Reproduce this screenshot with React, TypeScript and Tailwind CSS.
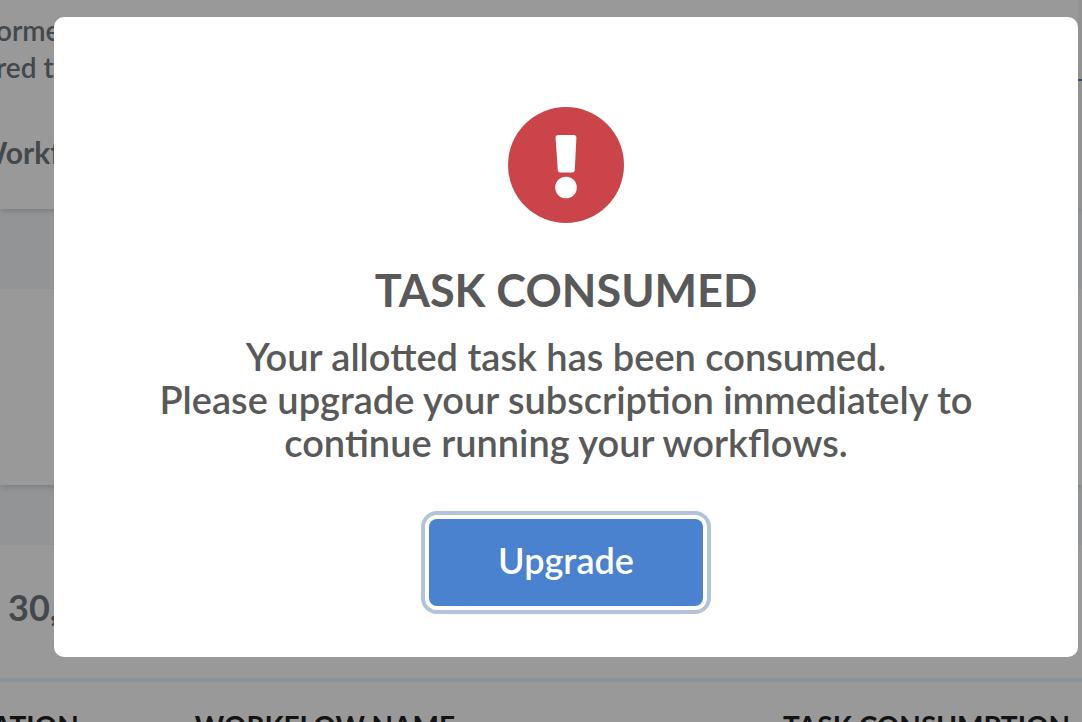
const columns = [
  { label: "ATION", className: "w-[18%] -indent-2" },
  { label: "WORKFLOW NAME", className: "w-[54%]" },
  { label: "TASK CONSUMPTION", className: "pl-1" },
];

const WarningIcon = () => (
  <svg viewBox="0 0 116 116" className="size-[116px]" aria-hidden="true">
    <circle cx="58" cy="58" r="58" fill="#ca444a" />
    <path
      d="M50.4 28h15.2a2.8 2.8 0 0 1 2.8 3l-1.6 31.900a2.600 2.600 0 0 1-2.600 2.500H52.400a2.600 2.600 0 0 1-2.600-2.500L47.600 31a2.800 2.800 0 0 1 2.800-3z"
      fill="#fff"
    />
    <circle cx="58" cy="80.500" r="10.800" fill="#fff" />
  </svg>
);

const Dashboard = () => (
  <div className="h-screen overflow-hidden bg-[#f3f7fa] whitespace-nowrap text-[#71797f]">
    <section className="flex h-[209px] justify-between bg-white shadow-md">
      <div className="-ml-1 pt-3">
        <p className="text-[28px] leading-[37px] font-semibold">
          orme
          <br />
          red t
        </p>
        <h2 className="-ml-5 pt-12 text-[30px] leading-9 font-bold">Workf</h2>
      </div>
      <div className="w-1 bg-[#f3f3f3] pt-[79px]">
        <div className="h-0.5 bg-[#3f7df5]" />
      </div>
    </section>

    <section className="mt-20 h-[196px] bg-white shadow-md" />

    <section className="mt-15 bg-white shadow-md">
      <p className="h-[133px] pt-[39px] pl-2 text-[36px] leading-[46px] font-bold">30,</p>
      <table className="w-full table-fixed border-t-4 border-[#eaf3fb] text-left text-[28px] leading-9 text-[#202020]">
        <thead>
          <tr>
            {columns.map((column) => (
              <th key={column.label} className={`pt-[26px] font-bold ${column.className}`}>
                {column.label}
              </th>
            ))}
          </tr>
        </thead>
      </table>
    </section>
  </div>
);

const TaskConsumedDialog = () => (
  <div className="fixed inset-0 bg-black/40 pt-[17px] pr-1 pl-[54px]">
    <div
      role="alertdialog"
      aria-modal="true"
      aria-labelledby="dialog-title"
      aria-describedby="dialog-text"
      className="flex flex-col items-center rounded-[10px] bg-white px-16 pt-[90px] pb-[51px] text-center text-[#595959]"
    >
      <WarningIcon />
      <h1 id="dialog-title" className="mt-[39px] text-[45px] leading-14 font-bold">
        TASK CONSUMED
      </h1>
      <p id="dialog-text" className="mt-[17px] text-[38px] leading-[43px] font-semibold">
        Your allotted task has been consumed.
        <br />
        Please upgrade your subscription immediately to
        <br />
        continue running your workflows.
      </p>
      <button
        type="button"
        className="mt-[55px] h-[87px] w-[274px] rounded-lg bg-[#4a82cf] pb-1.5 text-[36px] leading-[44px] font-semibold text-white ring-4 ring-[#b3c3da] ring-offset-4"
      >
        Upgrade
      </button>
    </div>
  </div>
);

export default function App() {
  return (
    <div className="font-[Lato,'Open_Sans',sans-serif]">
      <Dashboard />
      <TaskConsumedDialog />
    </div>
  );
}
